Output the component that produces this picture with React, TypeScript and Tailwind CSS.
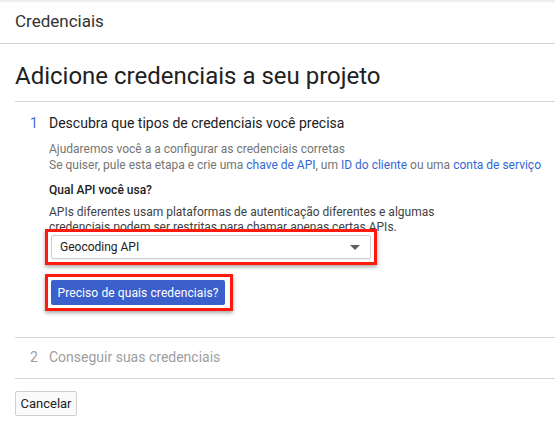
import React from 'react';

const App: React.FC = () => {
    return (
        <div className="w-[555px] h-[429px] bg-white overflow-hidden text-[#212121]" style={{ fontFamily: 'Roboto, "Liberation Sans", sans-serif' }}>
            {/* top bar */}
            <div className="h-[44px] flex items-center pl-[15px] border-b border-[#d4d4d4] shadow-[inset_0_3px_3px_-2px_rgba(0,0,0,0.12)]">
                <span className="text-[17px] text-[#333333]">Credenciais</span>
            </div>

            <div className="ml-[15px]">
                <h1 className="pt-[18px] pb-[11px] text-[24px] leading-[28px] border-b border-[#d4d4d4]">
                    Adicione credenciais a seu projeto
                </h1>

                {/* step 1 */}
                <div className="pl-[15px] pt-[11px] pb-[26px] border-b border-[#d4d4d4]">
                    <div className="flex text-[14px] leading-[20px]">
                        <span className="w-[19px] text-[#4470d6]">1</span>
                        <span>Descubra que tipos de credenciais você precisa</span>
                    </div>
                    <div className="ml-[19px]">
                        <p className="mt-[8px] text-[12px] leading-[16px] text-[#757575]">
                            Ajudaremos você a a configurar as credenciais corretas
                            <br />
                            Se quiser, pule esta etapa e crie uma <a className="text-[#3367d6]">chave de API</a>, um <a className="text-[#3367d6]">ID do cliente</a> ou uma <a className="text-[#3367d6]">conta de serviço</a>
                        </p>
                        <p className="mt-[9px] text-[12px] leading-[16px] font-medium">Qual API você usa?</p>
                        <p className="mt-[7px] text-[12px] leading-[15px] text-[#424242] w-[400px]">
                            APIs diferentes usam plataformas de autenticação diferentes e algumas credenciais podem ser restritas para chamar apenas certas APIs.
                        </p>

                        <div className="relative -mt-[6px] -ml-[4px] w-[332px] border-[3px] border-[#ff1a0e] bg-white p-[3px] shadow-[0_2px_4px_rgba(0,0,0,0.35)]">
                            <div className="h-[24px] flex items-center justify-between pl-[8px] pr-[10px] border border-[#d0d0d0] rounded-[2px] shadow-[0_1px_1px_rgba(0,0,0,0.08)]">
                                <span className="text-[12px] text-[#212121]">Geocoding API</span>
                                <svg width="10" height="5" viewBox="0 0 10 5"><path d="M0 0 L10 0 L5 5 Z" fill="#616161" /></svg>
                            </div>
                        </div>

                        <div className="mt-[9px] -ml-[4px] w-[188px] border-[3px] border-[#ff1a0e] bg-white p-[3px] shadow-[0_2px_4px_rgba(0,0,0,0.35)]">
                            <button className="h-[25px] w-[174px] rounded-[2px] bg-[#3b5fcb] text-white text-[12px] tracking-[0.1px] whitespace-nowrap flex items-center justify-center">
                                Preciso de quais credenciais?
                            </button>
                        </div>
                    </div>
                </div>

                {/* step 2 */}
                <div className="pl-[15px] pt-[9px] pb-[11px] border-b border-[#d4d4d4] flex text-[14px] leading-[20px] text-[#9e9e9e]">
                    <span className="w-[19px]">2</span>
                    <span>Conseguir suas credenciais</span>
                </div>

                <button className="mt-[12px] h-[25px] w-[62px] border border-[#cfcfcf] rounded-[2px] bg-[#fafafa] text-[13px] text-[#212121]">
                    Cancelar
                </button>
            </div>
        </div>
    );
};

export default App;
